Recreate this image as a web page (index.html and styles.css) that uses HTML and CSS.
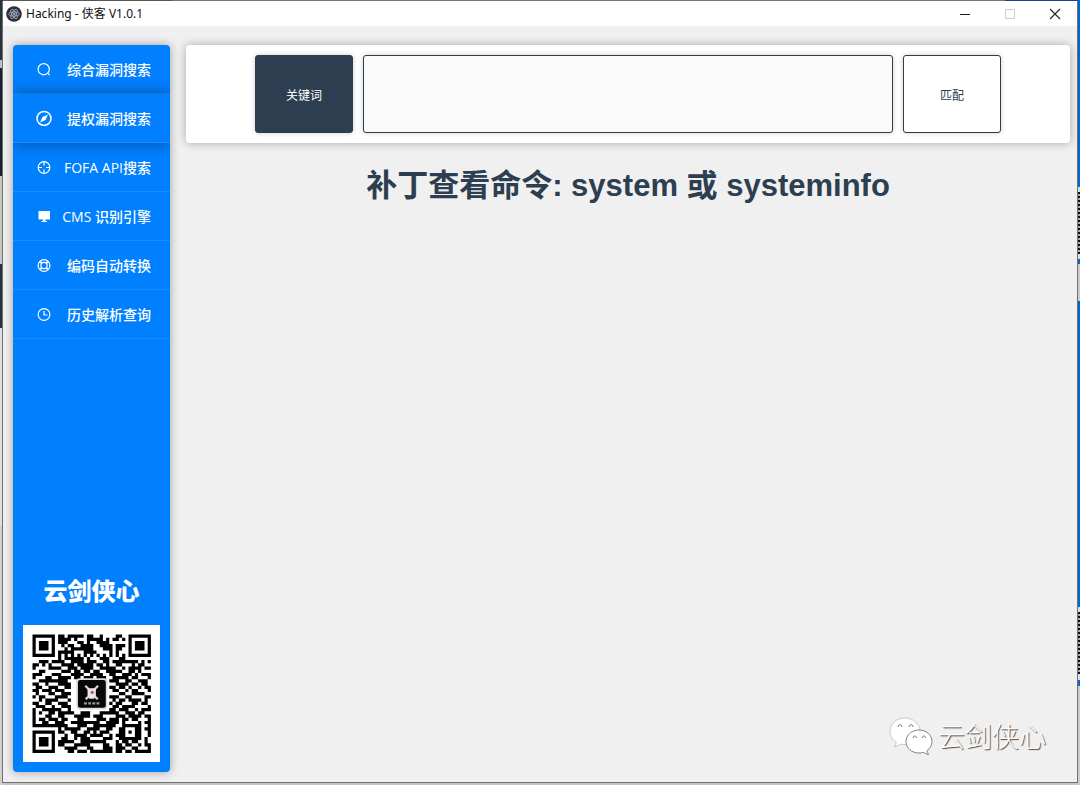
FILE: index.html
```html
<!DOCTYPE html>
<html lang="zh-CN">
<head>
<meta charset="utf-8">
<title>Hacking - 侠客 V1.0.1</title>
<link rel="stylesheet" href="styles.css">
</head>
<body>
<div class="window">
  <header class="titlebar">
    <svg class="app-icon" viewBox="0 0 16 16" aria-hidden="true">
      <circle cx="8" cy="8" r="7.8" fill="#2b2e3b"/>
      <g fill="none" stroke="#a8b4c2" stroke-width=".8">
        <ellipse cx="8" cy="8" rx="5.3" ry="2.1"/>
        <ellipse cx="8" cy="8" rx="5.3" ry="2.1" transform="rotate(60 8 8)"/>
        <ellipse cx="8" cy="8" rx="5.3" ry="2.1" transform="rotate(120 8 8)"/>
      </g>
      <circle cx="8" cy="8" r=".9" fill="#c5d0da"/>
    </svg>
    <span class="window-title">Hacking - 侠客 V1.0.1</span>
    <div class="window-controls">
      <button class="control" type="button" aria-label="最小化"><svg viewBox="0 0 12 12"><path d="M1 6.5h10" stroke="#222"/></svg></button>
      <button class="control" type="button" aria-label="最大化" disabled><svg viewBox="0 0 12 12"><path d="M1.500 1.500h9v9h-9z" stroke="#ccc" fill="none"/></svg></button>
      <button class="control" type="button" aria-label="关闭"><svg viewBox="0 0 12 12"><path d="M1 1l10 10M11 1L1 11" stroke="#222" stroke-width="1.1"/></svg></button>
    </div>
  </header>
  <div class="workspace">
    <aside class="sidebar">
      <nav class="menu">
        <a class="menu-item" href="#search"><svg class="menu-icon" viewBox="0 0 16 16"><circle cx="7.700" cy="8.200" r="5.600"/><path d="M11.600 12.200l2 2"/></svg><span>综合漏洞搜索</span></a>
        <a class="menu-item active" href="#privilege"><svg class="menu-icon" viewBox="0 0 16 16"><circle cx="8" cy="8.400" r="7" stroke-width="1.500"/><path class="solid" d="M12 4.400L9.500 9.900 4 12.400 6.500 6.900z"/></svg><span>提权漏洞搜索</span></a>
        <a class="menu-item" href="#fofa"><svg class="menu-icon" viewBox="0 0 16 16"><circle cx="8" cy="8.500" r="5.800"/><path d="M8 2.500v4M8 10.500v4M2 8.500h4M10 8.500h4"/></svg><span>FOFA API搜索</span></a>
        <a class="menu-item" href="#cms"><svg class="menu-icon" viewBox="0 0 16 16"><path class="solid" d="M2.500 3h11.500v8.500H2.500zM7 11.500h2.500v1.500h1.500v1H5.500v-1H7z"/></svg><span>CMS 识别引擎</span></a>
        <a class="menu-item" href="#encode"><svg class="menu-icon" viewBox="0 0 16 16"><circle cx="8" cy="8.500" r="5.900"/><circle cx="8" cy="8.500" r="3.100"/><path d="M4.200 4.700l1.500 1.500M11.800 4.700l-1.500 1.500M4.200 12.300l1.500-1.500M11.800 12.300l-1.500-1.500" stroke-width="1.800"/></svg><span>编码自动转换</span></a>
        <a class="menu-item" href="#history"><svg class="menu-icon" viewBox="0 0 16 16"><circle cx="8" cy="8.500" r="5.900"/><path d="M8 5v4h3.500"/></svg><span>历史解析查询</span></a>
      </nav>
      <div class="brand">
        <p class="brand-name">云剑侠心</p>
        <svg class="qr" viewBox="0 0 137 137" role="img" aria-label="二维码">
          <path fill="#fff" d="M0 0h137v137H0z"/>
          <g transform="translate(9.5 9.5) scale(3.2)">
            <path id="qr-modules" fill="#000"/>
            <rect x="13.7" y="13.7" width="9.7" height="9.7" rx="1" fill="#ddd"/>
            <rect x="14.2" y="14.2" width="8.7" height="8.7" rx=".7" fill="#080808"/>
            <g fill="none" stroke="#d8d8d8" stroke-width=".7"><path d="M16.5 16l1.4 1.400M20.500 16l-1.400 1.400M16.600 20.200l1.200-1M20.400 20.200l-1.200-1"/></g>
            <path fill="#e8e8e8" d="M17.200 16.800h2.600v2.300l-.6 1h-1.400l-.6-1z"/>
            <path fill="#b44" d="M18.200 17.700h.9v.8h-.9z"/>
            <path d="M16.100 21.500h4.800" stroke="#999" stroke-width=".7" stroke-dasharray=".9 .4"/>
          </g>
        </svg>
      </div>
    </aside>
    <main class="content">
      <form class="search-panel">
        <label class="keyword" for="keyword">关键词</label>
        <input class="keyword-input" id="keyword" type="text">
        <button class="match" type="button">匹配</button>
      </form>
      <h1 class="hint">补丁查看命令: system 或 systeminfo</h1>
    </main>
  </div>
  <div class="watermark">
    <svg class="wechat" viewBox="0 0 44 38" aria-hidden="true">
      <g fill="#fff" stroke="#aaa" stroke-width=".6">
        <path d="M16 1C7.500 1 1 7 1 14.500c0 4.500 2.500 8.200 6.300 10.700L5.500 30l6-2.900c1.500.4 3 .6 4.500.6 8.300 0 15-6 15-13.300S24.300 1 16 1z"/>
        <path stroke="#777" stroke-width=".9" d="M30 13c-7.500 0-13 5.200-13 11.500S22.500 36 30 36c1.500 0 3-.2 4.300-.6l5.200 2.400-1.500-4.200c3.200-2.100 5-5.300 5-9.100C43 18.200 37.500 13 30 13z"/>
      </g>
      <g fill="none" stroke="#777" stroke-width="1"><path d="M9 10c0-3 4-3 4 0M20 10c0-3 4-3 4 0M24 21c0-2.600 3.500-2.600 3.500 0M33 21c0-2.600 3.500-2.600 3.500 0"/></g>
    </svg>
    <span>云剑侠心</span>
  </div>
</div>
<script src="qr.js"></script>
</body>
</html>
```
FILE: styles.css
```css
* { box-sizing: border-box; }

body {
  margin: 0;
  min-height: 100vh;
  padding: 1px 2px 2px 2px;
  display: flex;
  font-family: "Liberation Sans", "Noto Sans CJK SC", sans-serif;
  color: #2c3e50;
  background:
    linear-gradient(#26343d 0 60px, #b9c4bd 60px 68px, #17222c 68px 176px, #c4c9c4 176px 264px, #26343f 264px 328px, #ddd 328px 526px, #d0d0d0 526px) left top / 3px 100% no-repeat,
    repeating-linear-gradient(#111 0 2px, #aaa 2px 4px) right 192px / 3px 62px no-repeat,
    repeating-linear-gradient(#111 0 2px, #aaa 2px 4px) right 612px / 3px 62px no-repeat,
    linear-gradient(#0067d8 0 187px, #ddd 187px 259px, #0067d8 259px 264px, #ccc 264px 301px, #0067d8 301px 607px, #ddd 607px 680px, #0067d8 680px 686px, #ccc 686px) right top / 3px 100% no-repeat,
    linear-gradient(90deg, #59564f 0 172px, #777 172px 1005px, #16458a 1005px) left top / 100% 2px no-repeat,
    #c4c4c4;
}

.window {
  position: relative;
  flex: 1;
  display: flex;
  flex-direction: column;
  background: #f0f0f0;
  border: 1px solid #707070;
  border-top: 0;
}

.titlebar {
  display: flex;
  align-items: center;
  height: 25px;
  padding-left: 3px;
  background: #fff;
  color: #111;
  font-family: "Noto Sans", "Noto Sans CJK SC", sans-serif;
  font-size: 12px;
}

.app-icon { width: 16px; height: 16px; margin-right: 4px; }
.window-title { line-height: 16px; }
.window-controls { display: flex; margin-left: auto; }

.control {
  display: grid;
  place-items: center;
  width: 45px;
  height: 24px;
  padding: 0;
  border: 0;
  background: none;
}

.control svg { width: 12px; height: 12px; }

.workspace {
  flex: 1;
  display: flex;
  gap: 16px;
  min-width: 0;
  padding: 19px 7px 10px 10px;
}

.sidebar {
  width: 157px;
  display: flex;
  flex-direction: column;
  background: #007fff;
  border-radius: 4px;
  box-shadow: 0 0 10px rgba(0, 0, 0, .35);
  overflow: hidden;
}

.menu-item {
  display: flex;
  align-items: center;
  justify-content: space-between;
  height: 49px;
  padding: 0 19px 0 23px;
  border-bottom: 1px solid #1a8cff;
  color: #fff;
  font-family: "Open Sans", "Noto Sans CJK SC", sans-serif;
  font-size: 14px;
  font-weight: 500;
  text-decoration: none;
}

.menu-item.active {
  position: relative;
  box-shadow: 0 0 14px rgba(0, 0, 0, .4);
}

.menu-icon {
  width: 16px;
  height: 16px;
  fill: none;
  stroke: #fff;
  stroke-width: 1.2;
}

.menu-icon .solid { fill: #fff; stroke: none; }

.brand { margin-top: auto; padding: 10px; }

.brand-name {
  margin: 0 0 17px;
  color: #fff;
  font-family: "Noto Sans CJK SC", sans-serif;
  font-size: 24px;
  line-height: 36px;
  font-weight: 900;
  text-align: center;
}

.qr { display: block; width: 100%; }

.content { flex: 1; min-width: 0; }

.search-panel {
  display: flex;
  gap: 10px;
  height: 98px;
  padding: 10px 69px;
  background: #fff;
  border-radius: 4px;
  box-shadow: 0 0 10px rgba(0, 0, 0, .3);
}

.keyword, .match {
  display: grid;
  place-items: center;
  flex: 0 0 98px;
  border: 1px solid #2c3e50;
  border-radius: 3px;
  box-shadow: 0 0 5px rgba(0, 0, 0, .2);
  font-family: "Noto Sans CJK SC", sans-serif;
  font-size: 12px;
}

.keyword { background: #2c3e50; color: #fff; }
.match { background: #fff; color: #2c3e50; }

.keyword-input {
  flex: 1;
  min-width: 0;
  padding: 0 12px;
  border: 1px solid #2c3e50;
  border-radius: 3px;
  background: #fafafa;
  box-shadow: 0 0 5px rgba(0, 0, 0, .2);
  font-size: 16px;
}

.hint {
  margin: 23px 0 0;
  font-size: 31px;
  line-height: 40px;
  text-align: center;
}

.watermark {
  position: absolute;
  right: 31px;
  bottom: 26px;
  display: flex;
  align-items: center;
  gap: 5px;
  color: #fff;
  font-family: "Noto Sans CJK SC", sans-serif;
  font-size: 27px;
  font-weight: 300;
  line-height: 40px;
  text-shadow: 1px 1px 1px #444;
}

.wechat { width: 44px; height: 38px; }
```
FILE: qr.js
```js
const rows = [
  "1111111011011111011001000011001111111",
  "1000001011110100011111010110101000001",
  "1011101011100011010011110000001011101",
  "1011101001011001111001111011101011101",
  "1011101000101111111000111011001011101",
  "1000001011111000111100001010001000001",
  "1111111010101010101010101010101111111",
  "0000000010111111010001110001100000000",
  "0011101111001111011100110111111110101",
  "1101010001111011111011010011000101100",
  "1000011110011101111001111100101111011",
  "0011000001110110110110011111001101000",
  "1110001110001111001111001100111010111",
  "1000110011110110111011100111110110001",
  "0011111111100000000000001110011001110",
  "1100100011110000000000000011110110110",
  "0110011100110000000000001101101001011",
  "1101110111000000000000000110010110001",
  "0100011001110000000000000001100111100",
  "1011000111100000000000001110011000011",
  "0010111100010000000000000101101111010",
  "1100110011100000000000001011000110110",
  "0111001001110000000000000110111100001",
  "1001111110010000000000001101110010111",
  "1010011011111001110001111110011101100",
  "1000110011000111110111000011101111011",
  "1011011101100011000011101110110110001",
  "1001100111001111111110011110100001011",
  "1111111111100011100111111100111111001",
  "0000000010111110011110011001100011011",
  "1111111011001100110101110001101011001",
  "1000001000100111101111001011100011001",
  "1011101001100101110000111001111111010",
  "1011101011111001111111100010110110010",
  "1011101011000111110000110011011001011",
  "1000001000111100011000111011100110001",
  "1111111000011011101111111011011011111"
];

document.getElementById("qr-modules").setAttribute("d", rows.map((row, y) =>
  [...row.matchAll(/1+/g)].map(run => `M${run.index} ${y}h${run[0].length}v1h-${run[0].length}z`).join("")
).join(""));
```
